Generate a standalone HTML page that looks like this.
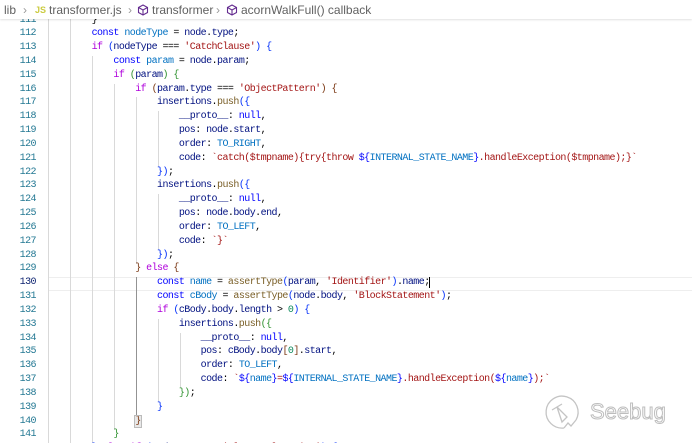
<!DOCTYPE html>
<html><head><meta charset="utf-8"><style>
html,body{margin:0;padding:0;background:#fff;width:692px;height:443px;overflow:hidden;position:relative}
#bc{position:absolute;left:0;top:0;width:692px;height:19px;background:#fff;z-index:5;font:12px "Liberation Sans",sans-serif;color:#616161;box-shadow:0 1px 2px rgba(0,0,0,.12)}
#bc span{position:absolute;top:3px;white-space:nowrap}
#code{position:absolute;left:0;top:14.5px;width:692px}
.l{position:relative;height:13.83px;line-height:13.83px;font:10px "Liberation Mono",monospace;letter-spacing:-0.55px;white-space:pre}
.n{position:absolute;left:0;width:36px;text-align:right;color:#237893}
.t{position:absolute;left:48px;color:#000}
.g{position:absolute;top:0;width:1px;height:14px;background:#d9d9d9}
.ga{background:#939393}
.k{color:#af00db}.c{color:#0000ff}.v{color:#001080}.f{color:#795e26}.s{color:#a31515}.o{color:#0070c1}.u{color:#098658}
.b1{color:#0431fa}.b2{color:#319331}.b3{color:#7b3814}
#hl{position:absolute;left:48px;top:0;width:644px;height:12px;border-top:1px solid #eee;border-bottom:1px solid #eee}
</style></head><body>
<div id="bc"><span style="left:4px">lib</span><span style="left:23px;color:#999">&#x203A;</span><span style="left:35px;color:#cbcb41;font-size:9px;font-weight:bold;top:5px">JS</span><span style="left:49px">transformer.js</span><span style="left:128px;color:#999">&#x203A;</span>
<svg style="position:absolute;left:137px;top:4px" width="12" height="12" viewBox="0 0 12 12"><path d="M6 1L10.5 3.5V8.5L6 11L1.5 8.5V3.5Z M1.5 3.5L6 6L10.5 3.5 M6 6V11" fill="none" stroke="#652d90" stroke-width="1.1"/></svg>
<span style="left:152px">transformer</span><span style="left:216px;color:#999">&#x203A;</span>
<svg style="position:absolute;left:226px;top:4px" width="12" height="12" viewBox="0 0 12 12"><path d="M6 1L10.5 3.5V8.5L6 11L1.5 8.5V3.5Z M1.5 3.5L6 6L10.5 3.5 M6 6V11" fill="none" stroke="#652d90" stroke-width="1.1"/></svg>
<span style="left:241px">acornWalkFull() callback</span></div>
<div id="code">
<div class="l"><span class="n">111</span><i class="g" style="left:48px"></i><i class="g" style="left:70px"></i><span class="t">        }</span></div>
<div class="l"><span class="n">112</span><i class="g" style="left:48px"></i><i class="g" style="left:70px"></i><span class="t">        <span class="c">const</span> <span class="o">nodeType</span> = <span class="v">node</span>.<span class="v">type</span>;</span></div>
<div class="l"><span class="n">113</span><i class="g" style="left:48px"></i><i class="g" style="left:70px"></i><span class="t">        <span class="k">if</span> <span class="b1">(</span><span class="v">nodeType</span> === <span class="s">'CatchClause'</span><span class="b1">)</span> <span class="b1">{</span></span></div>
<div class="l"><span class="n">114</span><i class="g" style="left:48px"></i><i class="g" style="left:70px"></i><i class="g" style="left:92px"></i><span class="t">            <span class="c">const</span> <span class="o">param</span> = <span class="v">node</span>.<span class="v">param</span>;</span></div>
<div class="l"><span class="n">115</span><i class="g" style="left:48px"></i><i class="g" style="left:70px"></i><i class="g" style="left:92px"></i><span class="t">            <span class="k">if</span> <span class="b2">(</span><span class="v">param</span><span class="b2">)</span> <span class="b2">{</span></span></div>
<div class="l"><span class="n">116</span><i class="g" style="left:48px"></i><i class="g" style="left:70px"></i><i class="g" style="left:92px"></i><i class="g" style="left:114px"></i><span class="t">                <span class="k">if</span> <span class="b3">(</span><span class="v">param</span>.<span class="v">type</span> === <span class="s">'ObjectPattern'</span><span class="b3">)</span> <span class="b3">{</span></span></div>
<div class="l"><span class="n">117</span><i class="g" style="left:48px"></i><i class="g" style="left:70px"></i><i class="g" style="left:92px"></i><i class="g" style="left:114px"></i><i class="g" style="left:136px"></i><span class="t">                    <span class="v">insertions</span>.<span class="f">push</span><span class="b1">({</span></span></div>
<div class="l"><span class="n">118</span><i class="g" style="left:48px"></i><i class="g" style="left:70px"></i><i class="g" style="left:92px"></i><i class="g" style="left:114px"></i><i class="g" style="left:136px"></i><i class="g" style="left:158px"></i><span class="t">                        <span class="v">__proto__</span>: <span class="c">null</span>,</span></div>
<div class="l"><span class="n">119</span><i class="g" style="left:48px"></i><i class="g" style="left:70px"></i><i class="g" style="left:92px"></i><i class="g" style="left:114px"></i><i class="g" style="left:136px"></i><i class="g" style="left:158px"></i><span class="t">                        <span class="v">pos</span>: <span class="v">node</span>.<span class="v">start</span>,</span></div>
<div class="l"><span class="n">120</span><i class="g" style="left:48px"></i><i class="g" style="left:70px"></i><i class="g" style="left:92px"></i><i class="g" style="left:114px"></i><i class="g" style="left:136px"></i><i class="g" style="left:158px"></i><span class="t">                        <span class="v">order</span>: <span class="o">TO_RIGHT</span>,</span></div>
<div class="l"><span class="n">121</span><i class="g" style="left:48px"></i><i class="g" style="left:70px"></i><i class="g" style="left:92px"></i><i class="g" style="left:114px"></i><i class="g" style="left:136px"></i><i class="g" style="left:158px"></i><span class="t">                        <span class="v">code</span>: <span class="s">`catch($tmpname){try{throw </span><span class="c">${</span><span class="o">INTERNAL_STATE_NAME</span><span class="c">}</span><span class="s">.handleException($tmpname);}`</span></span></div>
<div class="l"><span class="n">122</span><i class="g" style="left:48px"></i><i class="g" style="left:70px"></i><i class="g" style="left:92px"></i><i class="g" style="left:114px"></i><i class="g" style="left:136px"></i><span class="t">                    <span class="b1">})</span>;</span></div>
<div class="l"><span class="n">123</span><i class="g" style="left:48px"></i><i class="g" style="left:70px"></i><i class="g" style="left:92px"></i><i class="g" style="left:114px"></i><i class="g" style="left:136px"></i><span class="t">                    <span class="v">insertions</span>.<span class="f">push</span><span class="b1">({</span></span></div>
<div class="l"><span class="n">124</span><i class="g" style="left:48px"></i><i class="g" style="left:70px"></i><i class="g" style="left:92px"></i><i class="g" style="left:114px"></i><i class="g" style="left:136px"></i><i class="g" style="left:158px"></i><span class="t">                        <span class="v">__proto__</span>: <span class="c">null</span>,</span></div>
<div class="l"><span class="n">125</span><i class="g" style="left:48px"></i><i class="g" style="left:70px"></i><i class="g" style="left:92px"></i><i class="g" style="left:114px"></i><i class="g" style="left:136px"></i><i class="g" style="left:158px"></i><span class="t">                        <span class="v">pos</span>: <span class="v">node</span>.<span class="v">body</span>.<span class="v">end</span>,</span></div>
<div class="l"><span class="n">126</span><i class="g" style="left:48px"></i><i class="g" style="left:70px"></i><i class="g" style="left:92px"></i><i class="g" style="left:114px"></i><i class="g" style="left:136px"></i><i class="g" style="left:158px"></i><span class="t">                        <span class="v">order</span>: <span class="o">TO_LEFT</span>,</span></div>
<div class="l"><span class="n">127</span><i class="g" style="left:48px"></i><i class="g" style="left:70px"></i><i class="g" style="left:92px"></i><i class="g" style="left:114px"></i><i class="g" style="left:136px"></i><i class="g" style="left:158px"></i><span class="t">                        <span class="v">code</span>: <span class="s">`}`</span></span></div>
<div class="l"><span class="n">128</span><i class="g" style="left:48px"></i><i class="g" style="left:70px"></i><i class="g" style="left:92px"></i><i class="g" style="left:114px"></i><i class="g" style="left:136px"></i><span class="t">                    <span class="b1">})</span>;</span></div>
<div class="l"><span class="n">129</span><i class="g" style="left:48px"></i><i class="g" style="left:70px"></i><i class="g" style="left:92px"></i><i class="g" style="left:114px"></i><span class="t">                <span class="b3">}</span> <span class="k">else</span> <span class="b3">{</span></span></div>
<div class="l"><div id="hl"></div><span class="n" style="color:#0b216f">130</span><i class="g" style="left:48px"></i><i class="g" style="left:70px"></i><i class="g" style="left:92px"></i><i class="g" style="left:114px"></i><i class="g ga" style="left:136px"></i><span class="t">                    <span class="c">const</span> <span class="o">name</span> = <span class="f">assertType</span><span class="b1">(</span><span class="v">param</span>, <span class="s">'Identifier'</span><span class="b1">)</span>.<span class="v">name</span>;<span style="border-left:1.5px solid #000;margin-left:-1px"></span></span></div>
<div class="l"><span class="n">131</span><i class="g" style="left:48px"></i><i class="g" style="left:70px"></i><i class="g" style="left:92px"></i><i class="g" style="left:114px"></i><i class="g ga" style="left:136px"></i><span class="t">                    <span class="c">const</span> <span class="o">cBody</span> = <span class="f">assertType</span><span class="b1">(</span><span class="v">node</span>.<span class="v">body</span>, <span class="s">'BlockStatement'</span><span class="b1">)</span>;</span></div>
<div class="l"><span class="n">132</span><i class="g" style="left:48px"></i><i class="g" style="left:70px"></i><i class="g" style="left:92px"></i><i class="g" style="left:114px"></i><i class="g ga" style="left:136px"></i><span class="t">                    <span class="k">if</span> <span class="b1">(</span><span class="v">cBody</span>.<span class="v">body</span>.<span class="v">length</span> &gt; <span class="u">0</span><span class="b1">)</span> <span class="b1">{</span></span></div>
<div class="l"><span class="n">133</span><i class="g" style="left:48px"></i><i class="g" style="left:70px"></i><i class="g" style="left:92px"></i><i class="g" style="left:114px"></i><i class="g ga" style="left:136px"></i><i class="g" style="left:158px"></i><span class="t">                        <span class="v">insertions</span>.<span class="f">push</span><span class="b2">({</span></span></div>
<div class="l"><span class="n">134</span><i class="g" style="left:48px"></i><i class="g" style="left:70px"></i><i class="g" style="left:92px"></i><i class="g" style="left:114px"></i><i class="g ga" style="left:136px"></i><i class="g" style="left:158px"></i><i class="g" style="left:180px"></i><span class="t">                            <span class="v">__proto__</span>: <span class="c">null</span>,</span></div>
<div class="l"><span class="n">135</span><i class="g" style="left:48px"></i><i class="g" style="left:70px"></i><i class="g" style="left:92px"></i><i class="g" style="left:114px"></i><i class="g ga" style="left:136px"></i><i class="g" style="left:158px"></i><i class="g" style="left:180px"></i><span class="t">                            <span class="v">pos</span>: <span class="v">cBody</span>.<span class="v">body</span><span class="b3">[</span><span class="u">0</span><span class="b3">]</span>.<span class="v">start</span>,</span></div>
<div class="l"><span class="n">136</span><i class="g" style="left:48px"></i><i class="g" style="left:70px"></i><i class="g" style="left:92px"></i><i class="g" style="left:114px"></i><i class="g ga" style="left:136px"></i><i class="g" style="left:158px"></i><i class="g" style="left:180px"></i><span class="t">                            <span class="v">order</span>: <span class="o">TO_LEFT</span>,</span></div>
<div class="l"><span class="n">137</span><i class="g" style="left:48px"></i><i class="g" style="left:70px"></i><i class="g" style="left:92px"></i><i class="g" style="left:114px"></i><i class="g ga" style="left:136px"></i><i class="g" style="left:158px"></i><i class="g" style="left:180px"></i><span class="t">                            <span class="v">code</span>: <span class="s">`</span><span class="c">${</span><span class="o">name</span><span class="c">}</span><span class="s">=</span><span class="c">${</span><span class="o">INTERNAL_STATE_NAME</span><span class="c">}</span><span class="s">.handleException(</span><span class="c">${</span><span class="o">name</span><span class="c">}</span><span class="s">);`</span></span></div>
<div class="l"><span class="n">138</span><i class="g" style="left:48px"></i><i class="g" style="left:70px"></i><i class="g" style="left:92px"></i><i class="g" style="left:114px"></i><i class="g ga" style="left:136px"></i><i class="g" style="left:158px"></i><span class="t">                        <span class="b2">})</span>;</span></div>
<div class="l"><span class="n">139</span><i class="g" style="left:48px"></i><i class="g" style="left:70px"></i><i class="g" style="left:92px"></i><i class="g" style="left:114px"></i><i class="g ga" style="left:136px"></i><span class="t">                    <span class="b1">}</span></span></div>
<div class="l"><span class="n">140</span><i class="g" style="left:48px"></i><i class="g" style="left:70px"></i><i class="g" style="left:92px"></i><i class="g" style="left:114px"></i><span class="t">                <span class="b3" style="background:#e8e8e8;outline:1px solid #bbb">}</span></span></div>
<div class="l"><span class="n">141</span><i class="g" style="left:48px"></i><i class="g" style="left:70px"></i><i class="g" style="left:92px"></i><span class="t">            <span class="b2">}</span></span></div>
<div class="l"><span class="n">142</span><i class="g" style="left:48px"></i><i class="g" style="left:70px"></i><span class="t">        <span class="b1">}</span> <span class="k">else</span> <span class="k">if</span> <span class="b1">(</span><span class="v">nodeType</span> === <span class="s">'ClassDeclaration'</span><span class="b1">)</span> <span class="b1">{</span></span></div>
</div>
<svg style="position:absolute;left:540px;top:392px" width="140" height="46" viewBox="0 0 140 46">
<g fill="none" stroke="#c4c4c4" stroke-width="1.3">
<path d="M24 36 A16 16 0 1 1 36 28"/><path d="M24 36 L28 31 L31 34 L36 28"/>
<path d="M12 18 L22 12 M17 15 L22 30 L27 25 Z"/>
</g>
<text x="50" y="27" font-family="Liberation Sans,sans-serif" font-size="22" fill="#fff" stroke="#bdbdbd" stroke-width="1">Seebug</text>
</svg>
</body></html>
